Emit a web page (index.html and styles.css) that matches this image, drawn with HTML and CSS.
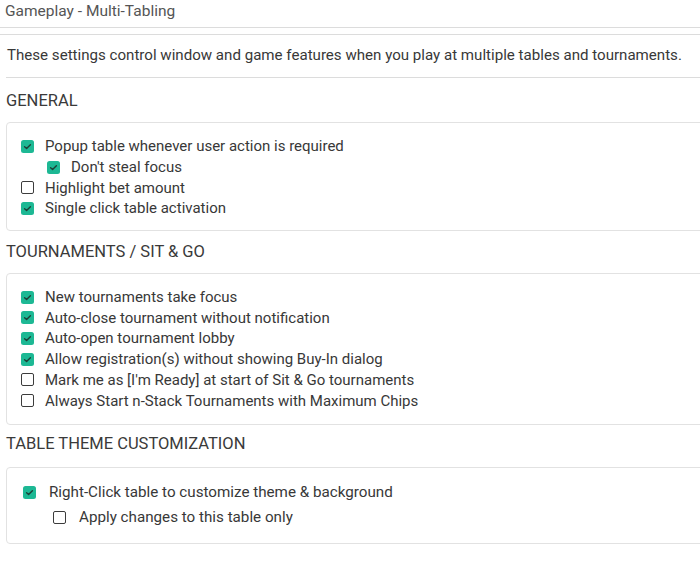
FILE: index.html
```html
<!DOCTYPE html>
<html>
<head>
<meta charset="utf-8">
<link rel="stylesheet" href="styles.css">
</head>
<body>
<div class="page">
  <div class="title">Gameplay - Multi-Tabling</div>
  <div class="desc-wrap">
    <p class="desc">These settings control window and game features when you play at multiple tables and tournaments.</p>
  </div>

  <h2 class="section-title first">GENERAL</h2>
  <div class="box general">
    <div class="row"><span class="cb on"><svg viewBox="0 0 13 13"><path d="M3.6 6.8 L5.6 8.6 L9.4 4.8"/></svg></span>Popup table whenever user action is required</div>
    <div class="row indent"><span class="cb on"><svg viewBox="0 0 13 13"><path d="M3.6 6.8 L5.6 8.6 L9.4 4.8"/></svg></span>Don't steal focus</div>
    <div class="row"><span class="cb"></span>Highlight bet amount</div>
    <div class="row"><span class="cb on"><svg viewBox="0 0 13 13"><path d="M3.6 6.8 L5.6 8.6 L9.4 4.8"/></svg></span>Single click table activation</div>
  </div>

  <h2 class="section-title">TOURNAMENTS / SIT &amp; GO</h2>
  <div class="box tourn">
    <div class="row"><span class="cb on"><svg viewBox="0 0 13 13"><path d="M3.6 6.8 L5.6 8.6 L9.4 4.8"/></svg></span>New tournaments take focus</div>
    <div class="row"><span class="cb on"><svg viewBox="0 0 13 13"><path d="M3.6 6.8 L5.6 8.6 L9.4 4.8"/></svg></span>Auto-close tournament without notification</div>
    <div class="row"><span class="cb on"><svg viewBox="0 0 13 13"><path d="M3.6 6.8 L5.6 8.6 L9.4 4.8"/></svg></span>Auto-open tournament lobby</div>
    <div class="row"><span class="cb on"><svg viewBox="0 0 13 13"><path d="M3.6 6.8 L5.6 8.6 L9.4 4.8"/></svg></span>Allow registration(s) without showing Buy-In dialog</div>
    <div class="row"><span class="cb"></span>Mark me as [I'm Ready] at start of Sit &amp; Go tournaments</div>
    <div class="row"><span class="cb"></span>Always Start n-Stack Tournaments with Maximum Chips</div>
  </div>

  <h2 class="section-title tight">TABLE THEME CUSTOMIZATION</h2>
  <div class="box theme">
    <div class="row"><span class="cb on"><svg viewBox="0 0 13 13"><path d="M3.6 6.8 L5.6 8.6 L9.4 4.8"/></svg></span>Right-Click table to customize theme &amp; background</div>
    <div class="row indent"><span class="cb"></span>Apply changes to this table only</div>
  </div>
</div>
</body>
</html>
```
FILE: styles.css
```css
html, body {
  margin: 0;
  padding: 0;
  overflow: hidden;
  background: #ffffff;
}
body {
  font-family: Roboto, "Liberation Sans", sans-serif;
  font-size: 15px;
  color: #383838;
}
.page {
  width: 730px;
}
.title {
  line-height: 20px;
  padding: 1px 5px 6px;
  border-bottom: 1px solid #dcdcdc;
  color: #555;
  font-size: 15.5px;
}
.desc-wrap {
  margin-top: 6px;
  border-top: 1px solid #dcdcdc;
}
.desc {
  margin: 0 0 0 6px;
  padding: 10px 0 12px 1px;
  line-height: 20px;
  border-bottom: 1px solid #dcdcdc;
  font-size: 15.1px;
}
.section-title {
  margin: 11px 0 11px 6px;
  font-size: 16.5px;
  font-weight: 400;
  line-height: 20px;
  color: #3a3a3a;
}
.section-title.first {
  margin-top: 13px;
  margin-bottom: 11px;
}
.section-title.tight {
  margin-top: 9px;
  margin-bottom: 13px;
}
.box {
  margin-left: 6px;
  border: 1px solid #e2e2e2;
  border-radius: 4px;
  padding: 12px 0 12px 14px;
}
.box.general {
  padding-top: 13px;
  padding-bottom: 11px;
}
.box.tourn {
  padding-top: 13px;
  padding-bottom: 13px;
}
.box.theme {
  padding: 12px 0 13px 16px;
  font-size: 15.2px;
}
.row {
  display: flex;
  align-items: center;
  height: 20.7px;
  white-space: nowrap;
}
.theme .row {
  height: 25px;
}
.row.indent {
  padding-left: 26px;
}
.theme .row.indent {
  padding-left: 30px;
}
.cb {
  flex: none;
  width: 13px;
  height: 13px;
  box-sizing: border-box;
  border: 1.5px solid #3c3c3c;
  border-radius: 2px;
  margin-right: 11px;
  background: #fff;
}
.theme .cb {
  margin-right: 13px;
}
.cb.on {
  border: none;
  background: #1db894;
  border-radius: 2.5px;
}
.cb svg {
  display: block;
  width: 13px;
  height: 13px;
}
.cb svg path {
  fill: none;
  stroke: #1d3f36;
  stroke-width: 1.4;
  stroke-linecap: round;
  stroke-linejoin: round;
}
```
